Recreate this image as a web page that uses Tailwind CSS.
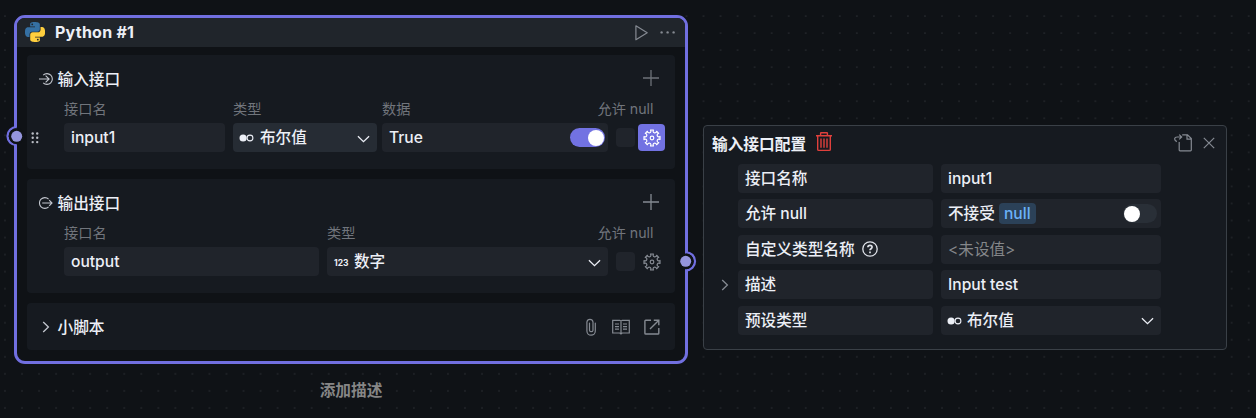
<!DOCTYPE html>
<html lang="zh-CN">
<head>
<meta charset="utf-8">
<title>Python #1</title>
<script src="https://cdn.jsdelivr.net/npm/@tailwindcss/browser@4"></script>
</head>
<body class="relative w-[1256px] h-[418px] overflow-hidden bg-[#0f1216] font-['Inter','Noto_Sans_CJK_SC',sans-serif] text-[15.6px] leading-5 font-medium text-[#eceff6]">
<svg class="absolute size-0">
  <defs>
    <pattern id="grid" x="-3.5" y="7.5" width="17.037" height="17.037" patternUnits="userSpaceOnUse"><circle cx="8.5" cy="8.5" r="0.8" fill="#2a2d32"/></pattern>
    <symbol id="gear" viewBox="-9 -9 18 18"><path fill="none" stroke="currentColor" stroke-width="1.2" stroke-linejoin="round" d="M-1.5-8H1.5A1.75 1.75 0 1 0 4.6-6.72L6.72-4.6A1.75 1.75 0 1 0 8-1.5V1.5A1.75 1.75 0 1 0 6.72 4.6L4.6 6.72A1.75 1.75 0 1 0 1.5 8H-1.5A1.75 1.75 0 1 0-4.6 6.72L-6.72 4.6A1.75 1.75 0 1 0-8 1.5V-1.5A1.75 1.75 0 1 0-6.72-4.6L-4.6-6.72A1.75 1.75 0 1 0-1.5-8Z"/><circle r="1.8" fill="none" stroke="currentColor" stroke-width="1.2"/></symbol>
    <symbol id="down" viewBox="0 0 14 8"><path fill="none" stroke="currentColor" stroke-width="1.4" d="M1 1L7 6.8L13 1"/></symbol>
    <symbol id="right" viewBox="0 0 8 12"><path fill="none" stroke="currentColor" stroke-width="1.3" d="M1.2 1L6.4 6L1.2 11"/></symbol>
    <symbol id="bool" viewBox="0 0 15 8"><circle cx="4.1" cy="4" r="3.6" fill="currentColor"/><circle cx="11" cy="4" r="2.9" fill="none" stroke="currentColor" stroke-width="1.1"/></symbol>
    <symbol id="plus" viewBox="0 0 16 16"><path fill="none" stroke="currentColor" stroke-width="1.3" d="M8 0V16M0 8H16"/></symbol>
  </defs>
</svg>
<svg class="absolute inset-0" width="1256" height="418"><rect width="1256" height="418" fill="url(#grid)"/></svg>

<!-- Python node -->
<main class="absolute left-[14px] top-[15px] w-[674px] h-[349px] rounded-[11px] border-3 border-[#716fe0] bg-[#0f1216]">
  <header class="flex items-center h-[29px] rounded-t-lg bg-[#20252b] pl-2 pr-[9px]">
    <svg class="size-5 -mt-px" viewBox="0 0 24 24"><path fill="#3570a3" d="M14.25.18l.9.2.73.26.59.3.45.32.34.34.25.34.16.33.1.3.04.26.02.2-.01.13V8.5l-.05.63-.13.55-.21.46-.26.38-.3.31-.33.25-.35.19-.35.14-.33.1-.3.07-.26.04-.21.02H8.77l-.69.05-.59.14-.5.22-.41.27-.33.32-.27.35-.2.36-.15.37-.1.35-.07.32-.04.27-.02.21v3.06H3.17l-.21-.03-.28-.07-.32-.12-.35-.18-.36-.26-.36-.36-.35-.46-.32-.59-.28-.73-.21-.88-.14-1.05-.05-1.23.06-1.22.16-1.04.24-.87.32-.71.36-.57.4-.44.42-.33.42-.24.4-.16.36-.1.32-.05.24-.01h.16l.06.01h8.16v-.83H6.18l-.01-2.75-.02-.37.05-.34.11-.31.17-.28.25-.26.31-.23.38-.2.44-.18.51-.15.58-.12.64-.1.71-.06.77-.04.84-.02 1.27.05zm-6.3 1.98l-.23.33-.08.41.08.41.23.34.33.22.41.09.41-.09.33-.22.23-.34.08-.41-.08-.41-.23-.33-.33-.22-.41-.09-.41.09z"/><path fill="#ffcf3e" d="M21.1 6.11l.28.06.32.12.35.18.36.27.36.35.35.47.32.59.28.73.21.88.14 1.04.05 1.23-.06 1.23-.16 1.04-.24.86-.32.71-.36.57-.4.45-.42.33-.42.24-.4.16-.36.09-.32.05-.24.02-.16-.01h-8.22v.82h5.84l.01 2.76.02.36-.05.34-.11.31-.17.29-.25.25-.31.24-.38.2-.44.17-.51.15-.58.13-.64.09-.71.07-.77.04-.84.01-1.27-.04-1.07-.14-.9-.2-.73-.25-.59-.3-.45-.33-.34-.34-.25-.34-.16-.33-.1-.3-.04-.25-.02-.2.01-.13v-5.34l.05-.64.13-.54.21-.46.26-.38.3-.32.33-.24.35-.2.35-.14.33-.1.3-.06.26-.04.21-.02.13-.01h5.84l.69-.05.59-.14.5-.21.41-.28.33-.32.27-.35.2-.36.15-.36.1-.35.07-.32.04-.28.02-.21V6.07h2.09l.14.01zm-6.47 14.25l-.23.33-.08.41.08.41.23.33.33.23.41.08.41-.08.33-.23.23-.33.08-.41-.08-.41-.23-.33-.33-.23-.41-.08-.41.08z"/></svg>
    <h1 class="ml-[10px] pb-[2px] text-base tracking-[.015em] font-bold">Python #1</h1>
    <svg class="ml-auto w-[14px] h-4 text-[#858a92]" viewBox="0 0 14 16"><path fill="none" stroke="currentColor" stroke-width="1.2" stroke-linejoin="round" d="M.9 .8L12.2 7.8L.9 14.8Z"/></svg>
    <svg class="ml-[11px] w-4 h-4 text-[#858a92]" viewBox="0 0 16 16" fill="currentColor"><circle cx="1.6" cy="7.4" r="1.2"/><circle cx="7.6" cy="7.4" r="1.2"/><circle cx="13.6" cy="7.4" r="1.2"/></svg>
  </header>

  <div class="flex flex-col gap-[10px] px-[10px] pt-2">
    <section class="h-[114px] rounded bg-[#161a20]">
      <div class="flex items-center h-[47px] pl-3 pr-4">
        <svg class="w-[14px] h-3" viewBox="0 0 14 12" fill="none" stroke="#c3c7cf" stroke-width="1.1"><path d="M4.2 2.1A5.4 5.4 0 1 1 4.2 9.9"/><path d="M0 6H10M6.6 2.6L10.1 6L6.6 9.4"/></svg>
        <h2 class="ml-[4.5px] pt-[2px] text-[15.7px]">输入接口</h2>
        <svg class="ml-auto -mt-[2px] size-4 text-[#6d7178]"><use href="#plus"/></svg>
      </div>
      <div class="flex items-center h-[14px] pl-[37px] pr-[21.5px] text-[14.2px] leading-[14px] font-normal text-[#71757c]">
        <span class="w-[169px]">接口名</span><span class="w-[149px]">类型</span><span>数据</span><span class="ml-auto">允许 null</span>
      </div>
      <div class="flex items-center mt-[7px] h-[29px] pl-1">
        <svg class="w-[8px] h-3" viewBox="0 0 8 12" fill="#b9bcc4"><circle cx="1.7" cy="1.5" r="1.2"/><circle cx="6.2" cy="1.5" r="1.2"/><circle cx="1.7" cy="5.8" r="1.2"/><circle cx="6.2" cy="5.8" r="1.2"/><circle cx="1.7" cy="10.1" r="1.2"/><circle cx="6.2" cy="10.1" r="1.2"/></svg>
        <div class="ml-[25px] flex items-center w-[161px] h-[29px] rounded bg-[#20242b] px-[7px]">input1</div>
        <div class="ml-2 flex items-center w-36 h-[29px] rounded bg-[#262c34] pl-[6px] pr-[7px]">
          <svg class="w-[15px] h-2 mt-px"><use href="#bool"/></svg><span class="ml-[6px]">布尔值</span>
          <svg class="ml-auto mt-[2px] w-[13px] h-2"><use href="#down"/></svg>
        </div>
        <div class="ml-[5px] flex items-center w-[226px] h-[29px] rounded bg-[#20242b] pl-[7px] pr-[3px]">True
          <span class="ml-auto flex justify-end items-center w-[35px] h-[19px] rounded-full bg-[#7272e2] pr-px"><i class="size-4 rounded-full bg-white"></i></span>
        </div>
        <span class="ml-2 size-[19px] rounded bg-[#20242b]"></span>
        <span class="ml-[3px] flex items-center justify-center size-[27px] rounded bg-[#7272e2] text-white"><svg class="size-[18px]"><use href="#gear"/></svg></span>
      </div>
    </section>

    <section class="h-[114px] rounded bg-[#161a20]">
      <div class="flex items-center h-[47px] pl-3 pr-4">
        <svg class="w-[14px] h-3" viewBox="0 0 14 12" fill="none" stroke="#c3c7cf" stroke-width="1.1"><path d="M9.6 2.1A5.4 5.4 0 1 0 9.6 9.9"/><path d="M3.2 6H13M10.2 3.2L13 6L10.2 8.8"/></svg>
        <h2 class="ml-[4.5px] pt-[2px] text-[15.7px]">输出接口</h2>
        <svg class="ml-auto -mt-px size-4 text-[#858a92]"><use href="#plus"/></svg>
      </div>
      <div class="flex items-center h-[14px] pl-[37px] pr-[21.5px] text-[14.2px] leading-[14px] font-normal text-[#71757c]">
        <span class="w-[263px]">接口名</span><span>类型</span><span class="ml-auto">允许 null</span>
      </div>
      <div class="flex items-center mt-[7px] h-[29px] pl-[37px]">
        <div class="flex items-center w-[255px] h-[29px] rounded bg-[#20242b] px-[7px]">output</div>
        <div class="ml-2 flex items-center w-[281px] h-[29px] rounded bg-[#20242b] px-[7px]">
          <span class="w-[15px] mt-[3px] text-[8.5px] leading-none font-bold">123</span><span class="ml-[5px]">数字</span>
          <svg class="ml-auto mt-[2px] w-[13px] h-2"><use href="#down"/></svg>
        </div>
        <span class="ml-2 size-[19px] rounded bg-[#20242b]"></span>
        <span class="ml-[3px] flex items-center justify-center size-[27px] text-[#858a92]"><svg class="size-[18px]"><use href="#gear"/></svg></span>
      </div>
    </section>

    <section class="flex items-center h-[47px] rounded bg-[#161a20] pl-[15px] pr-[15px]">
      <svg class="w-2 h-3 text-[#c3c7cf]"><use href="#right"/></svg>
      <h2 class="ml-[7.5px] pt-[2px] text-[15.7px]">小脚本</h2>
      <div class="ml-auto flex items-center text-[#858a92]">
        <svg class="w-[10px] h-[18px]" viewBox="0 0 10 18" fill="none" stroke="currentColor" stroke-width="1.2" stroke-linecap="round"><path d="M9.3 5V13A4.2 4.2 0 0 1 .9 13V4A3.1 3.1 0 0 1 7 4V12.3A1.8 1.8 0 0 1 3.5 12.3V5"/></svg>
        <svg class="ml-4 w-[18px] h-4" viewBox="0 0 18 16" fill="none" stroke="currentColor" stroke-width="1.2"><path d="M9 2V15M.7 1.3H7.8L9 2.2L10.2 1.3H17.3V14H10.2L9 14.9L7.8 14H.7ZM3 5H7M3 7.6H7M3 10.2H7M11 5H15M11 7.6H15M11 10.2H15"/></svg>
        <svg class="ml-[14px] size-4" viewBox="0 0 16 16" fill="none" stroke="currentColor" stroke-width="1.4"><path d="M7 1.2H1.7Q.9 1.2.9 2V14.2Q.9 15 1.7 15H14Q14.8 15 14.8 14.2V9M9.8 1.2H14.8V6.2M14.8 1.2L6 10"/></svg>
      </div>
    </section>
  </div>

  <!-- Ports on the node's edges -->
  <svg class="absolute -left-[14px] top-[107px]" width="24" height="24" viewBox="0 0 24 24"><path d="M13.5 2.1A9 9 0 0 0 13.5 20.1" fill="#0f1216" stroke="#716fe0" stroke-width="2.3"/><circle cx="13.7" cy="11.2" r="7.9" fill="#0f1216"/><circle cx="13.7" cy="11.3" r="5.5" fill="#9595dd"/></svg>
  <svg class="absolute -right-[15px] top-[231px]" width="24" height="24" viewBox="0 0 24 24"><path d="M10 3.3A9 9 0 0 1 10 21.3" fill="#0f1216" stroke="#716fe0" stroke-width="2.3"/><circle cx="9.7" cy="12.3" r="7.9" fill="#0f1216"/><circle cx="9.7" cy="12.3" r="5.5" fill="#9595dd"/></svg>
</main>
<p class="absolute left-[14px] top-[381px] w-[674px] text-center text-[15.7px] font-bold text-[#868686]">添加描述</p>

<!-- Input port settings -->
<aside class="absolute left-[703px] top-[125px] w-[524px] h-[225px] rounded border border-[#3a4047] bg-[#161a20]">
  <div class="flex items-center h-9 pl-2 pr-[11.5px]">
    <h2 class="pt-px text-[15.7px] font-bold">输入接口配置</h2>
    <svg class="ml-[10px] -mt-[4px] w-4 h-5" viewBox="0 0 16 20" fill="none" stroke="#e0403c" stroke-width="1.4"><path d="M0 3.7H16M4.6 3.5V1.3Q4.6 .8 5.2 .8H10.8Q11.4 .8 11.4 1.3V3.5M1.7 3.7V17.4Q1.7 18.4 2.7 18.4H13.3Q14.3 18.4 14.3 17.4V3.7M5 6.5V15.8M8 6.5V15.8M11 6.5V15.8"/></svg>
    <svg class="ml-auto -mt-[3px] w-[18px] h-[18px]" viewBox="0 0 18 18" fill="none" stroke="#858a92" stroke-width="1.2"><path d="M8.2 .8H13.5L17.3 4.6V16Q17.3 16.8 16.5 16.8H6Q5.2 16.8 5.2 16V8M13 .8V5.1H17.3M2.8 7.6C-.4 6 .2 3 3.2 3H7.6M5.2.6L7.7 3L5.2 5.4"/></svg>
    <svg class="ml-[11px] -mt-[2px] size-3" viewBox="0 0 12 12" fill="none" stroke="#858a92" stroke-width="1.2"><path d="M.8.8L11.2 11.2M11.2.8L.8 11.2"/></svg>
  </div>
  <div class="grid grid-cols-[20px_195px_220px] auto-rows-[29px] items-center gap-x-2 gap-y-[6.4px] pt-[2px] pl-[6px] *:h-[29px]">
    <span></span><div class="flex items-center rounded bg-[#20242b] px-[7px]">接口名称</div><div class="flex items-center rounded bg-[#20242b] px-[7px]">input1</div>
    <span></span><div class="flex items-center rounded bg-[#20242b] px-[7px]">允许 null</div>
    <div class="flex items-center rounded bg-[#20242b] pl-[7px] pr-1">不接受<span class="ml-1 flex items-center justify-center w-[37px] h-[21px] rounded bg-[#2b4158] text-[#6bb2f8]">null</span>
      <span class="ml-auto flex items-center w-[34px] h-[19px] rounded-full bg-[#292f37] pl-px"><i class="size-4 rounded-full bg-white"></i></span></div>
    <span></span><div class="flex items-center rounded bg-[#20242b] px-[7px]"><span class="pt-px text-[15.7px]">自定义类型名称</span><svg class="ml-[7px] size-4" viewBox="0 0 16 16" fill="none" stroke="#dfe2e9" stroke-width="1.3"><circle cx="8" cy="8" r="7.2"/><path stroke-width="1.7" d="M5.9 6.3C5.9 3.6 10.1 3.7 10.1 6.1C10.1 7.7 8 7.7 8 9.3M8 10.5V12.2"/></svg></div><div class="flex items-center rounded bg-[#20242b] px-[7px] pt-px font-normal text-[#85878a]">&lt;未设值&gt;</div>
    <span class="flex items-center justify-end"><svg class="w-2 h-3 mr-px text-[#858a92]"><use href="#right"/></svg></span><div class="flex items-center rounded bg-[#20242b] px-[7px]">描述</div><div class="flex items-center rounded bg-[#20242b] px-[7px]">Input test</div>
    <span></span><div class="flex items-center rounded bg-[#20242b] px-[7px] pt-px">预设类型</div>
    <div class="flex items-center rounded bg-[#20242b] pl-[6px] pr-[7px]"><svg class="w-[15px] h-2 mt-px"><use href="#bool"/></svg><span class="ml-[5px] pt-px">布尔值</span><svg class="ml-auto mt-[2px] w-[13px] h-2"><use href="#down"/></svg></div>
  </div>
</aside>
</body>
</html>
